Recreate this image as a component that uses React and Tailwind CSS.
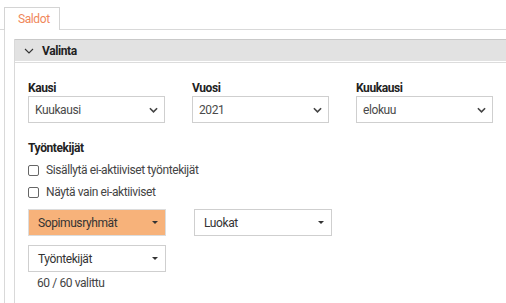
import React from "react";

const font = { fontFamily: 'Roboto, "Liberation Sans", sans-serif' };

const Chevron = ({ className = "", width = "1.8" }) => (
  <svg viewBox="0 0 10 6" className={className} fill="none" stroke="currentColor" strokeWidth={width}>
    <path d="M1 1l4 4 4-4" />
  </svg>
);

const Caret = () => (
  <svg viewBox="0 0 6 3" className="w-[6px] h-[3px] text-[#333]" fill="currentColor">
    <path d="M0 0h6L3 3z" />
  </svg>
);

const Select = ({ label, value }) => (
  <div className="flex flex-col w-[137px]">
    <div className="text-[12px] font-bold text-[#222] leading-[14px] mb-[1px]">{label}</div>
    <div className="h-[27px] border border-[#cfcfcf] flex items-center justify-between pl-[6px] pr-[6px] text-[12px] text-[#4a4a4a]">
      <span>{value}</span>
      <Chevron className="w-[9px] h-[6px] text-[#444]" />
    </div>
  </div>
);

const Dropdown = ({ label, active }) => (
  <div
    className={`w-[138px] h-[27px] border flex items-center justify-between pl-[9px] pr-[7px] text-[12px] text-[#333] ${
      active ? "bg-[#f7b27a] border-[#dcdcdc]" : "bg-white border-[#cfcfcf]"
    }`}
  >
    <span>{label}</span>
    <Caret />
  </div>
);

const Check = ({ label }) => (
  <label className="flex items-center gap-[7px] h-[14px] text-[12px] text-[#444]">
    <span className="w-[11px] h-[11px] border border-[#666] rounded-[2px] bg-white" />
    {label}
  </label>
);

export default function App() {
  return (
    <div className="w-[506px] h-[303px] bg-white overflow-hidden pt-[7px] tracking-[-0.4px]" style={font}>
      <div className="flex">
        <div className="w-[4px] border-b border-[#d9d9d9]" />
        <div className="w-[56px] h-[23px] border border-b-0 border-[#d4d4d4] flex items-center pl-[13px] text-[12px] text-[#f0875a]">
          Saldot
        </div>
        <div className="flex-1 border-b border-[#d9d9d9]" />
      </div>
      <div className="ml-[4px] border-l border-[#d9d9d9] pl-[9px] pt-[9px] h-[300px]">
        <div className="border-l border-[#d9d9d9] h-full">
          <div className="h-[22px] bg-[#e2e2e2] border-t border-[#c9c9c9] flex items-center pl-[9px] gap-[8px] text-[12px] font-bold text-[#222]">
            <Chevron className="w-[10px] h-[6px] text-[#333]" width="1.1" />
            Valinta
          </div>
          <div className="h-[1px] mt-[1px] bg-[#dcdcdc]" />
          <div className="pl-[13px] pt-[18px]">
            <div className="flex gap-[27px]">
              <Select label="Kausi" value="Kuukausi" />
              <Select label="Vuosi" value="2021" />
              <Select label="Kuukausi" value="elokuu" />
            </div>
            <div className="mt-[18px] text-[12px] font-bold text-[#222] leading-[14px]">Työntekijät</div>
            <div className="mt-[8px] flex flex-col gap-[8px]">
              <Check label="Sisällytä ei-aktiiviset työntekijät" />
              <Check label="Näytä vain ei-aktiiviset" />
            </div>
            <div className="mt-[10px] flex gap-[28px]">
              <Dropdown label="Sopimusryhmät" active />
              <Dropdown label="Luokat" />
            </div>
            <div className="mt-[9px]">
              <Dropdown label="Työntekijät" />
            </div>
            <div className="mt-[4px] pl-[9px] text-[12px] leading-[14px] text-[#444]">60 / 60 valittu</div>
          </div>
        </div>
      </div>
    </div>
  );
}
